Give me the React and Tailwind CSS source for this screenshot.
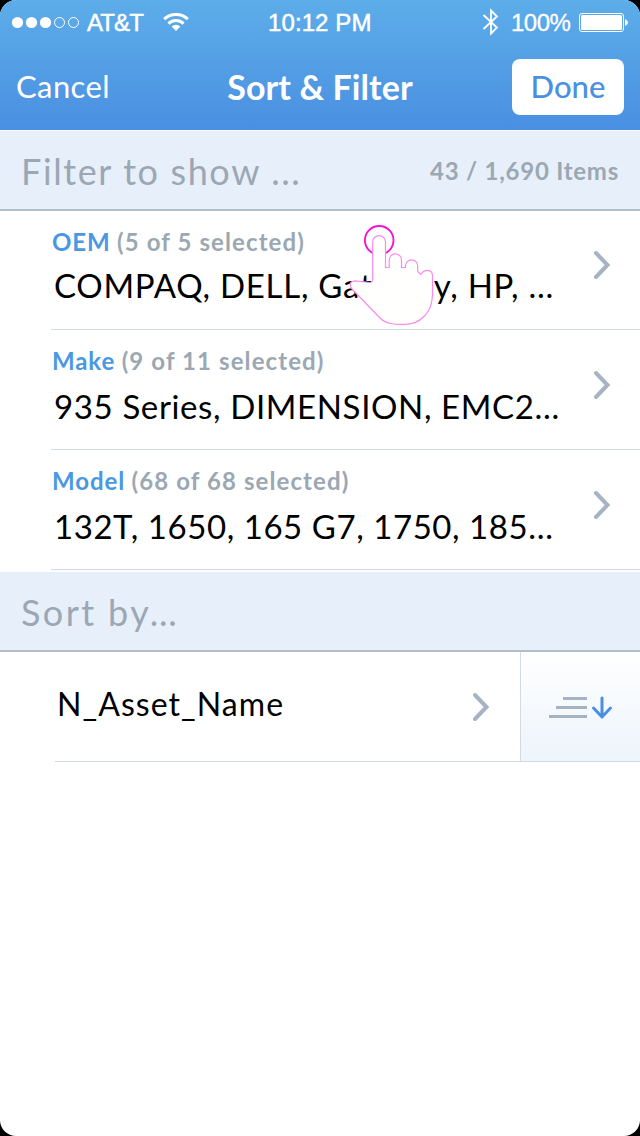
import React from "react";

const LATO = "font-['Lato','Liberation_Sans',sans-serif]";

function Chevron() {
  return (
    <svg className="h-[30px] w-[20px] shrink-0" viewBox="0 0 20 30" fill="none">
      <path d="M3 3 L14.5 15 L3 27" stroke="#a6b3c3" strokeWidth="4" strokeLinecap="round" />
    </svg>
  );
}

function StatusBar() {
  return (
    <div className="flex h-[46px] items-center font-['Liberation_Sans',sans-serif] text-2xl leading-[46px] text-white">
      <svg className="ml-[11px] h-[14px] w-[70px] shrink-0 -translate-y-[0.5px]" viewBox="0 0 70 14">
        <g fill="#fff">
          <circle cx="6.5" cy="7" r="5.6" />
          <circle cx="20.5" cy="7" r="5.6" />
          <circle cx="34.5" cy="7" r="5.6" />
        </g>
        <g fill="none" stroke="#fff" strokeWidth="1">
          <circle cx="48.5" cy="7" r="5" />
          <circle cx="62.5" cy="7" r="5" />
        </g>
      </svg>
      <div className="ml-[6px] w-[76px] whitespace-nowrap tracking-[-0.9px] [-webkit-text-stroke:0.5px_white]">AT&amp;T</div>
      <svg className="h-[18px] w-[26px] shrink-0 -translate-y-px" viewBox="0 0 26 18" fill="none" stroke="#fff" strokeWidth="3">
        <path d="M1.2 6.2 A17 17 0 0 1 24.8 6.2" />
        <path d="M5.4 10.6 A11 11 0 0 1 20.6 10.6" />
        <path d="M8.6 13.6 A6.2 6.2 0 0 1 17.4 13.6 L13 18 Z" fill="#fff" stroke="none" />
      </svg>
      <div className="ml-[79px] w-[214px] whitespace-nowrap tracking-[0.1px] [-webkit-text-stroke:0.5px_white]">10:12 PM</div>
      <svg className="h-[28px] w-[18px] shrink-0 -translate-y-px" viewBox="0 0 18 28" fill="none" stroke="#fff" strokeWidth="1.8">
        <path d="M1.5 7 L15 19.5 L9 25.5 V2.5 L15 8.5 L1.5 21" />
      </svg>
      <div className="ml-[11px] w-[68px] whitespace-nowrap tracking-[-0.5px] [-webkit-text-stroke:0.3px_white]">100%</div>
      <svg className="h-[20px] w-[50px] shrink-0" viewBox="0 0 50 20">
        <rect x="0.5" y="0.5" width="44" height="18" rx="2.5" fill="none" stroke="#fff" />
        <rect x="2" y="2" width="41" height="15" rx="1.5" fill="#fff" />
        <path d="M46 6 Q49 7.500 49 9.500 Q49 11.500 46 13 Z" fill="#fff" />
      </svg>
    </div>
  );
}

function NavBar() {
  return (
    <div className="flex h-[84px] items-start justify-between px-4 text-white">
      <div className="mt-[17px] w-[112px] whitespace-nowrap text-[31px] leading-[46px] tracking-[0.4px]">Cancel</div>
      <div className="mt-[18px] whitespace-nowrap text-[34px] font-bold leading-[46px] tracking-[0.1px]">Sort &amp; Filter</div>
      <div className="mt-[13px] h-14 w-[112px] whitespace-nowrap rounded-lg bg-white text-center text-[31px] font-medium leading-[54px] text-[#4a90e2]">Done</div>
    </div>
  );
}

function SectionHeader({ children }) {
  return (
    <div className="flex h-20 items-center justify-between border-b-2 border-[#b2bfca] bg-[#e7f0fa] px-[21px] pt-[2px] text-[#9ba8b3]">
      {children}
    </div>
  );
}

const filters = [
  {
    name: "OEM",
    count: "(5 of 5 selected)",
    value: "COMPAQ, DELL, Gateway, HP, ...",
    labelClass: "mt-[17px]",
    valueClass: "mt-[5px] tracking-[0.74px]",
  },
  {
    name: "Make",
    count: "(9 of 11 selected)",
    value: "935 Series, DIMENSION, EMC2…",
    labelClass: "mt-[16px]",
    valueClass: "mt-[7px] tracking-[0.63px]",
  },
  {
    name: "Model",
    count: "(68 of 68 selected)",
    value: "132T, 1650, 165 G7, 1750, 185…",
    labelClass: "mt-[16px]",
    valueClass: "mt-[7px] tracking-[0.56px]",
  },
];

function FilterRow({ name, count, value, labelClass, valueClass }) {
  return (
    <div className="ml-[51px] flex h-[120px] items-start border-b border-[#d0dbe4]">
      <div className="w-[542px] whitespace-nowrap">
        <div className={`flex h-[30px] gap-[6.5px] pl-px text-2xl font-bold leading-[30px] text-[#9ba8b3] ${labelClass}`}>
          <span className="tracking-[0.9px] text-[#4a98e2]">{name}</span>
          <span className="tracking-[1.1px]">{count}</span>
        </div>
        <div className={`pl-[3px] text-[33px] leading-[46px] text-black ${valueClass}`}>{value}</div>
      </div>
      <div className="mt-[40px]"><Chevron /></div>
    </div>
  );
}

function TapHand() {
  return (
    <svg className="absolute left-[340px] top-[215px] h-[120px] w-[110px]" viewBox="0 0 110 120" fill="none">
      <circle cx="39.200" cy="25.300" r="14.300" stroke="#f611d8" strokeWidth="1.900" />
      <path
        d="M32.700 64 V27 A6.300 6.300 0 0 1 45.500 27 V52.500 H49.200 V45 A6.100 6.100 0 0 1 61.500 45 V52.500 H65.500 V51 A6.100 6.100 0 0 1 77.700 51 V56.500 L80.800 59.500 C84 54 92.500 53.500 92.500 61 V80 C92 98 80 109.500 64 109.300 C54 109.500 46 109 40 103 L12 74 C9 70 9.500 66.500 15 65.800 L30 67.500 Q32.700 67.500 32.700 64 Z"
        fill="#fffffd" stroke="#f88bec" strokeWidth="1.200"
      />
    </svg>
  );
}

export default function App() {
  return (
    <div className="bg-black">
      <div className={`relative h-[1136px] w-[640px] overflow-hidden rounded-[16px] bg-white ${LATO}`}>
        <header className="h-[130px] bg-gradient-to-b from-[#5dade9] to-[#4a8fe1]">
          <StatusBar />
          <NavBar />
        </header>
        <div className="mt-px">
          <SectionHeader>
            <span className="text-[36px] tracking-[1.62px]">Filter to show ...</span>
            <span className="text-2xl font-bold tracking-[0.75px]">43 / 1,690 Items</span>
          </SectionHeader>
        </div>
        <div className="-mt-px">{filters.map((f) => <FilterRow key={f.name} {...f} />)}</div>
        <div className="mt-[2px]">
          <SectionHeader>
            <span className="text-[36px] tracking-[2.4px]">Sort by…</span>
          </SectionHeader>
        </div>
        <div className="flex h-[110px]">
          <div className="ml-[55px] flex w-[465px] items-center border-b border-[#d0dbe4]">
            <div className="w-[417px] pb-[5px] pl-[2px] text-[32px] leading-[46px] tracking-[1.05px] text-black">N_Asset_Name</div>
            <Chevron />
          </div>
          <div className="flex w-[120px] items-center border-b border-l border-[#d0dbe4] bg-gradient-to-b from-white to-[#edf4fb] pl-[28px]">
            <svg className="h-[24px] w-[66px] translate-y-px" viewBox="0 0 66 24" fill="none">
              <path d="M14 2.500 H38 M7 11.500 H38 M0 20.500 H38" stroke="#a6b3c3" strokeWidth="3" />
              <path d="M53 2 V21 M44.500 12 L53 21 L61.500 12" stroke="#4a90e2" strokeWidth="3" strokeLinecap="round" strokeLinejoin="round" />
            </svg>
          </div>
        </div>
        <TapHand />
      </div>
    </div>
  );
}
